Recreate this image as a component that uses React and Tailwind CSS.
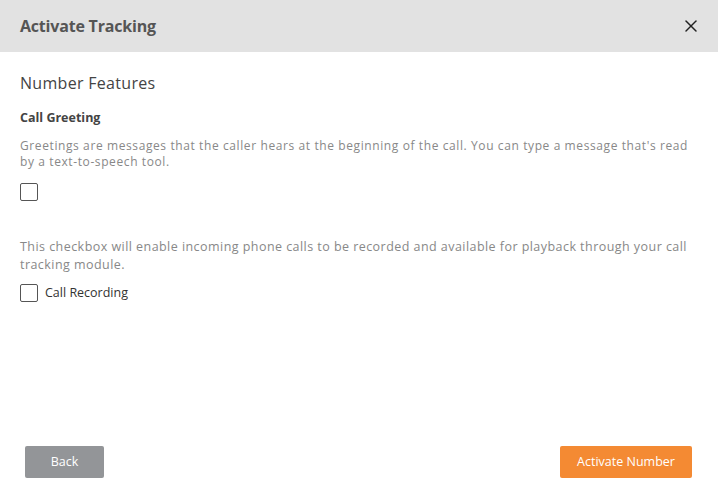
import { X } from 'lucide-react'

export default function App() {
    return (
        <div className="h-[498px] w-full bg-white flex flex-col font-['Open_Sans',sans-serif]">
            <header className="h-[52px] shrink-0 bg-[#e2e2e2] px-5 flex items-center justify-between">
                <h1 className="text-[16px] font-bold text-[#555] tracking-[-0.2px]">Activate Tracking</h1>
                <button className="text-[#222] -mr-[3px]">
                    <X size={20} strokeWidth={1.8} />
                </button>
            </header>

            <main className="flex-1 px-5 pt-[20px]">
                <h2 className="text-[16px] leading-[22px] text-[#444] tracking-[0.3px]">Number Features</h2>

                <p className="mt-4 text-[12.5px] leading-[16px] font-bold text-[#444]">Call Greeting</p>
                <p className="mt-3 text-[12px] leading-[16px] text-[#888] tracking-[0.6px]">
                    Greetings are messages that the caller hears at the beginning of the call. You can type a message that's read by a text-to-speech tool.
                </p>
                <input type="checkbox" className="appearance-none mt-[13px] block size-[18px] rounded-[2px] border border-[#555] bg-white" />

                <p className="mt-[37px] text-[12.5px] leading-[18px] text-[#888] tracking-[0.45px]">
                    This checkbox will enable incoming phone calls to be recorded and available for playback through your call tracking module.
                </p>
                <label className="mt-[10px] flex items-center gap-[7px]">
                    <input type="checkbox" className="appearance-none size-[18px] rounded-[2px] border border-[#555] bg-white" />
                    <span className="text-[12.5px] text-[#333]">Call Recording</span>
                </label>
            </main>

            <footer className="shrink-0 flex items-center justify-between pl-[25px] pr-[26px] pb-5">
                <button className="h-8 w-[79px] rounded-[2px] bg-[#939598] text-white text-[12.5px]">Back</button>
                <button className="h-8 w-[132px] rounded-[2px] bg-[#f48a33] text-white text-[12.5px]">Activate Number</button>
            </footer>
        </div>
    )
}
